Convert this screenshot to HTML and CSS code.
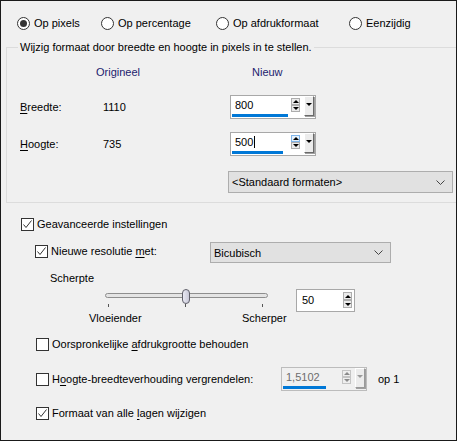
FILE: index.html
```html
<!DOCTYPE html>
<html lang="nl">
<head>
<meta charset="utf-8">
<title>Formaat wijzigen</title>
<link rel="stylesheet" href="styles.css">
</head>
<body>
<div class="win">
  <div class="radios">
    <label class="radio r1"><span class="rb on"></span><span>Op pixels</span></label>
    <label class="radio r2"><span class="rb"></span><span>Op percentage</span></label>
    <label class="radio r3"><span class="rb"></span><span>Op afdrukformaat</span></label>
    <label class="radio r4"><span class="rb"></span><span>Eenzijdig</span></label>
  </div>

  <div class="group">
    <div class="gtitle">Wijzig formaat door breedte en hoogte in pixels in te stellen.</div>
    <div class="hdr"><span class="h-orig">Origineel</span><span class="h-new">Nieuw</span></div>
    <div class="row row1">
      <span class="lbl"><u>B</u>reedte:</span><span class="val">1110</span>
      <div class="spin">
        <div class="field"><span class="num">800</span><span class="bar" style="width:56px"></span></div>
        <div class="updown"><span class="ud up"></span><span class="ud dn"></span></div>
        <span class="drop"></span>
      </div>
    </div>
    <div class="row row2">
      <span class="lbl"><u>H</u>oogte:</span><span class="val">735</span>
      <div class="spin">
        <div class="field"><span class="num">500<span class="caret"></span></span><span class="bar" style="width:51px"></span></div>
        <div class="updown"><span class="ud up hot"></span><span class="ud dn"></span></div>
        <span class="drop"></span>
      </div>
    </div>
    <div class="combo std"><span>&lt;Standaard formaten&gt;</span>
      <svg class="chev" width="9" height="5" viewBox="0 0 9 5"><path d="M0.5 0.5 L4.5 4.5 L8.5 0.5" fill="none" stroke="#444" stroke-width="1"/></svg>
    </div>
  </div>

  <div class="crow adv"><span class="cb on"><svg viewBox="0 0 11 11" width="11" height="11"><path d="M1.5 5.5 L4 8.5 L9.5 1.5" fill="none" stroke="#333" stroke-width="1"/></svg></span><span>Geavanceerde instellingen</span></div>

  <div class="resrow">
    <div class="crow inner res"><span class="cb on"><svg viewBox="0 0 11 11" width="11" height="11"><path d="M1.5 5.5 L4 8.5 L9.5 1.5" fill="none" stroke="#333" stroke-width="1"/></svg></span><span>Nieuwe resolutie <u>m</u>et:</span></div>
    <div class="combo bic"><span>Bicubisch</span>
      <svg class="chev" width="9" height="5" viewBox="0 0 9 5"><path d="M0.5 0.5 L4.5 4.5 L8.5 0.5" fill="none" stroke="#444" stroke-width="1"/></svg>
    </div>
  </div>

  <div class="scherpte">Scherpte</div>

  <div class="sliderrow">
    <div class="slider">
      <div class="track"></div>
      <span class="thumb"></span>
      <div class="ticks"><i></i><i></i><i></i></div>
    </div>
    <div class="spin small">
      <span class="num">50</span>
      <div class="updown"><span class="ud up"></span><span class="ud dn"></span></div>
    </div>
  </div>
  <div class="slabels"><span class="sl1">Vloeiender</span><span class="sl2">Scherper</span></div>

  <div class="crow inner keep"><span class="cb"></span><span>Oorspronkelijke <u>a</u>fdrukgrootte behouden</span></div>

  <div class="lockrow">
    <div class="crow inner lock"><span class="cb"></span><span>H<u>o</u>ogte-breedteverhouding vergrendelen:</span></div>
    <div class="spin dis">
      <div class="field"><span class="num">1,5102</span><span class="bar" style="width:43px"></span></div>
      <div class="updown"><span class="ud up"></span><span class="ud dn"></span></div>
      <span class="drop"></span>
    </div>
    <span class="op1">op 1</span>
  </div>

  <div class="crow inner layers"><span class="cb on"><svg viewBox="0 0 11 11" width="11" height="11"><path d="M1.5 5.5 L4 8.5 L9.5 1.5" fill="none" stroke="#333" stroke-width="1"/></svg></span><span>Formaat van alle <u>l</u>agen wijzigen</span></div>
</div>
</body>
</html>
```

FILE: styles.css
```css
* { box-sizing: border-box; }
html, body { margin: 0; padding: 0; background: #f0f0f0; }
body {
  font-family: "Liberation Sans", Arial, sans-serif;
  font-size: 11px;
  color: #000;
}
u { text-decoration-thickness: 1px; text-underline-offset: 2px; }

.win {
  width: 457px;
  height: 441px;
  border: 1px solid #1a1a1a;
  background: #f0f0f0;
  overflow: hidden;
}

/* radio row */
.radios {
  display: flex;
  height: 13px;
  margin-top: 16px;
  padding-left: 16px;
}
.radio { display: flex; align-items: center; height: 13px; line-height: 13px; white-space: nowrap; }
.r1 { width: 84px; }
.r2 { width: 115px; }
.r3 { width: 133px; }
.rb {
  width: 13px; height: 13px;
  border: 1px solid #333;
  border-radius: 50%;
  background: #fff;
  margin-right: 4px;
  display: flex; align-items: center; justify-content: center;
  flex: none;
}
.rb.on::after {
  content: "";
  width: 7px; height: 7px;
  border-radius: 50%;
  background: #333;
}

/* group box */
.group {
  margin: 17px 0 0 5px;
  height: 156px;
  border: 1px solid #dcdcdc;
  border-right: none;
}
.gtitle {
  width: max-content;
  margin: -8px 0 0 11px;
  padding: 0 2px;
  line-height: 15px;
  background: #f0f0f0;
}
.hdr {
  display: flex;
  margin-top: 10px;
  line-height: 15px;
  color: #1c1c6e;
}
.h-orig { margin-left: 89px; width: 156px; }
.row {
  display: flex;
  align-items: center;
  height: 24px;
  padding-left: 13px;
}
.row1 { margin-top: 15px; }
.row2 { margin-top: 13px; }
.lbl { width: 83px; }
.val { width: 127px; }

/* spin boxes */
.spin {
  display: flex;
  width: 86px;
  height: 24px;
  border: 1px solid #a8a8a8;
  background: #fff;
  padding: 0 1px;
}
.field { width: 58px; display: flex; flex-direction: column; }
.num { display: block; height: 15px; line-height: 15px; margin-top: 2px; padding-left: 3px; white-space: nowrap; }
.caret { display: inline-block; width: 1px; height: 12px; background: #000; vertical-align: -2px; margin-left: 1px; }
.bar { display: block; height: 3px; background: #0078d7; margin-top: 1px; }
.updown {
  display: flex; flex-direction: column;
  width: 9px;
  margin: 2px 0 0 2px;
}
.ud {
  width: 9px; height: 7px;
  border: 1px solid #adadad;
  background: #ebebeb;
  display: flex; align-items: center; justify-content: center;
}
.ud.hot { border-color: #7eb4ea; background: #e5f1fb; }
.ud.up::after {
  content: ""; width: 0; height: 0;
  border-left: 3px solid transparent; border-right: 3px solid transparent;
  border-bottom: 3px solid #000;
}
.ud.dn::after {
  content: ""; width: 0; height: 0;
  border-left: 3px solid transparent; border-right: 3px solid transparent;
  border-top: 3px solid #000;
}
.drop {
  width: 10px; height: 20px;
  margin: 0 0 0 4px;
  background: #ececec;
  border-top: 1px solid #fff;
  border-left: 1px solid #fff;
  border-right: 1px solid #6a6a6a;
  border-bottom: 1px solid #6a6a6a;
  box-shadow: 1px 1px 0 #a0a0a0;
  display: flex; align-items: flex-start; justify-content: center;
  padding-top: 6px;
}
.drop::after {
  content: ""; width: 0; height: 0;
  border-left: 3px solid transparent; border-right: 3px solid transparent;
  border-top: 3px solid #000;
}

.spin.small {
  width: 59px; height: 23px;
  margin-left: 28px;
  padding: 0 1px 0 5px;
  align-items: flex-start;
}
.spin.small .num { margin-top: 3px; padding-left: 0; flex: 1; }
.spin.small .updown { margin: 2px 1px 0 0; }
.spin.small .ud { height: 8px; }

.spin.dis { border-color: #bcbcbc; background: #f0f0f0; }
.spin.dis .num { color: #6d6d6d; }
.spin.dis .ud { border-color: #c4c4c4; background: #eeeeee; }
.spin.dis .ud::after { border-top-color: #8a8a8a; border-bottom-color: #8a8a8a; }
.spin.dis .drop { border-right-color: #9a9a9a; border-bottom-color: #9a9a9a; }
.spin.dis .drop::after { border-top-color: #9a9a9a; }

/* combos */
.combo {
  display: flex;
  align-items: center;
  justify-content: space-between;
  height: 22px;
  background: #e1e1e1;
  border: 1px solid #adadad;
  padding: 0 7px 0 3px;
}
.std { margin: 15px 0 0 221px; width: 225px; }
.bic { width: 181px; height: 21px; }

/* checkboxes */
.crow {
  display: flex;
  align-items: center;
  height: 13px;
  line-height: 13px;
  white-space: nowrap;
}
.cb {
  width: 13px; height: 13px;
  border: 1px solid #333;
  background: #fff;
  margin-right: 3px;
  flex: none;
  display: flex; align-items: center; justify-content: center;
}
.cb svg { display: block; }
.adv { margin-top: 15px; padding-left: 20px; }
.inner { padding-left: 35px; }

.resrow { display: flex; align-items: flex-start; margin-top: 11px; height: 21px; padding-left: 34px; }
.res { padding-left: 0; width: 175px; margin-top: 3px; }

.scherpte { margin-top: 8px; padding-left: 49px; line-height: 15px; }

.sliderrow { display: flex; margin-top: 3px; height: 23px; padding-left: 104px; }
.slider { position: relative; width: 163px; height: 23px; }
.track {
  margin-top: 4px;
  height: 5px;
  border: 1px solid #8e8e8e;
  border-radius: 3px;
  background: #e4e4e4;
}
.thumb {
  position: absolute;
  left: 77px; top: 0;
  width: 8px; height: 15px;
  border: 1px solid #5f5f6a;
  border-radius: 4px;
  background: linear-gradient(to right, #e9e9f3, #c9c9d8);
}
.ticks {
  display: flex;
  justify-content: space-between;
  padding: 0 5px 0 3px;
  margin-top: 6px;
}
.ticks i { display: block; width: 1px; height: 3px; background: #555; }

.slabels { display: flex; line-height: 13px; padding-left: 88px; }
.sl1 { width: 153px; }

.keep { margin-top: 13px; }

.lockrow { display: flex; align-items: center; height: 24px; margin-top: 16px; }
.lock { width: 280px; }
.op1 { margin-left: 11px; }

.layers { margin-top: 16px; }
```
